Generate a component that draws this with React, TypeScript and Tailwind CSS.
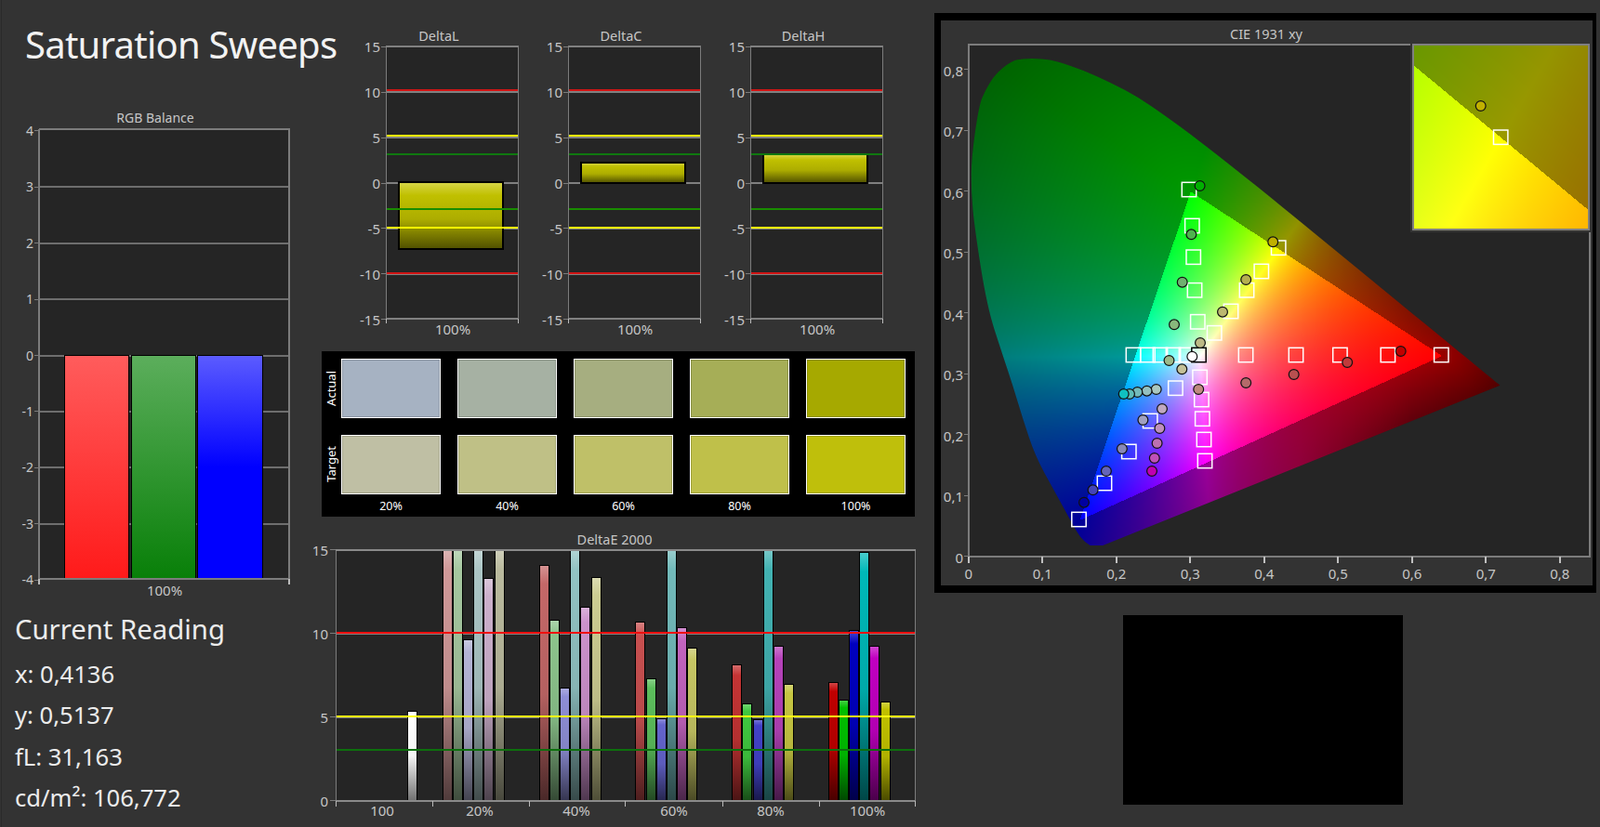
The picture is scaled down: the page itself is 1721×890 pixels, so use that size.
import { useEffect, useRef } from "react";

const AXIS = "#c6c6c6";
const FRAME = "#7c7c7c";
const GRID = "#6e6e6e";
const PLOT = "#252525";

// ---- colour helpers ----

type RGB = [number, number, number];

const shade = (c: RGB, f: number) => `rgb(${c.map((v) => Math.round(v * f)).join(",")})`;
const tint = (c: RGB, f: number) => `rgb(${c.map((v) => Math.round(v + (255 - v) * f)).join(",")})`;

// ---- CIE gamut ----

const TRI: [number, number][] = [
  [0.64, 0.33],
  [0.3, 0.6],
  [0.15, 0.06],
];

// outline of the diagram, measured off the chart and not the textbook locus
const LOCUS: [number, number][] = [
  [0.1645, 0.018], [0.1566, 0.024], [0.147, 0.0388], [0.133, 0.07], [0.115, 0.11], [0.09, 0.165],
  [0.0732, 0.227], [0.06, 0.28], [0.045, 0.335], [0.025, 0.41], [0.0082, 0.5384], [0.0035, 0.6],
  [0.0039, 0.6548], [0.0139, 0.7402], [0.0226, 0.766], [0.036, 0.792], [0.057, 0.813], [0.072, 0.818],
  [0.1, 0.818], [0.12, 0.813], [0.1547, 0.799], [0.1929, 0.778], [0.2296, 0.7543], [0.2658, 0.7243],
  [0.3016, 0.6923], [0.3373, 0.6589], [0.3731, 0.6245], [0.4087, 0.5896], [0.4441, 0.5547],
  [0.4788, 0.5202], [0.5125, 0.4866], [0.5448, 0.4544], [0.5752, 0.4242], [0.6029, 0.3965],
  [0.627, 0.3725], [0.6482, 0.3514], [0.6658, 0.334], [0.6801, 0.3197], [0.6915, 0.3083],
  [0.7006, 0.2993], [0.7079, 0.292], [0.714, 0.2859], [0.7191, 0.2809], [0.1817, 0.018],
];

function segDist(px: number, py: number, a: [number, number], b: [number, number]) {
  const dx = b[0] - a[0];
  const dy = b[1] - a[1];
  const t = Math.max(0, Math.min(1, ((px - a[0]) * dx + (py - a[1]) * dy) / (dx * dx + dy * dy)));
  return Math.hypot(px - a[0] - t * dx, py - a[1] - t * dy);
}

function gamutColor(x: number, y: number): RGB {
  const X = x / y;
  const Z = (1 - x - y) / y;
  const r = 3.2406 * X - 1.5372 - 0.4986 * Z;
  const g = -0.9689 * X + 1.8758 + 0.0415 * Z;
  const b = 0.0557 * X - 0.204 + 1.057 * Z;
  const inside = r >= 0 && g >= 0 && b >= 0;
  const cr = Math.max(r, 0);
  const cg = Math.max(g, 0);
  const cb = Math.max(b, 0);
  const m = Math.max(cr, cg, cb, 1e-6);
  let f = 1;
  if (!inside) {
    // outside the display triangle the diagram is dimmed, more so further out
    const d = Math.min(segDist(x, y, TRI[0], TRI[1]), segDist(x, y, TRI[1], TRI[2]), segDist(x, y, TRI[2], TRI[0]));
    const k = 0.64 + 2.4 * Math.max(0, Math.min(1, (x - 0.45) / 0.15));
    f = Math.max(0.33, 0.6 - k * d);
  }
  return [(255 * f * cr) / m, (255 * f * cg) / m, (255 * f * cb) / m];
}

function useGamut(
  width: number,
  height: number,
  toXY: (px: number, py: number) => [number, number],
  clip?: (ctx: CanvasRenderingContext2D) => void,
) {
  const ref = useRef<HTMLCanvasElement>(null);
  useEffect(() => {
    const ctx = ref.current?.getContext("2d");
    if (!ctx) return;
    const buffer = document.createElement("canvas");
    buffer.width = width;
    buffer.height = height;
    const bctx = buffer.getContext("2d")!;
    const img = bctx.createImageData(width, height);
    for (let py = 0; py < height; py++) {
      for (let px = 0; px < width; px++) {
        const [x, y] = toXY(px, py);
        if (y <= 0.001) continue;
        const [r, g, b] = gamutColor(x, y);
        const i = (py * width + px) * 4;
        img.data[i] = r;
        img.data[i + 1] = g;
        img.data[i + 2] = b;
        img.data[i + 3] = 255;
      }
    }
    bctx.putImageData(img, 0, 0);
    ctx.save();
    if (clip) clip(ctx);
    ctx.drawImage(buffer, 0, 0);
    ctx.restore();
  }, []);
  return ref;
}

// ---- RGB balance ----

function RgbBalance() {
  const yOf = (v: number) => 382.5 - v * 60.4;
  return (
    <svg width={344} height={530} viewBox="2 115 344 530" className="block" shapeRendering="crispEdges">
      <text x={167} y={132} textAnchor="middle" fontSize={14} fill={AXIS}>RGB Balance</text>
      <rect x={42} y={139} width={269} height={484} fill={PLOT} />
      {[3, 2, 1, 0, -1, -2, -3].map((v) => (
        <line key={v} x1={42} x2={311} y1={yOf(v)} y2={yOf(v)} stroke={GRID} strokeWidth={2} />
      ))}
      {[4, 3, 2, 1, 0, -1, -2, -3, -4].map((v) => (
        <g key={v}>
          <line x1={37} x2={42} y1={yOf(v)} y2={yOf(v)} stroke={FRAME} strokeWidth={1} />
          <text x={36} y={yOf(v) + 5} textAnchor="end" fontSize={14} fill={AXIS}>{v}</text>
        </g>
      ))}
      <defs>
        <linearGradient id="rgb-r" x1="0" x2="0" y1="0" y2="1">
          <stop offset="0" stopColor="#ff5c5c" />
          <stop offset="1" stopColor="#ff1a1a" />
        </linearGradient>
        <linearGradient id="rgb-g" x1="0" x2="0" y1="0" y2="1">
          <stop offset="0" stopColor="#5cae5c" />
          <stop offset="1" stopColor="#087f08" />
        </linearGradient>
        <linearGradient id="rgb-b" x1="0" x2="0" y1="0" y2="1">
          <stop offset="0" stopColor="#5c5cff" />
          <stop offset="0.5" stopColor="#0000ff" />
          <stop offset="1" stopColor="#0000ff" />
        </linearGradient>
      </defs>
      <rect x={69} y={382} width={69} height={241} fill="url(#rgb-r)" stroke="#000" />
      <rect x={141} y={382} width={69} height={241} fill="url(#rgb-g)" stroke="#000" />
      <rect x={212} y={382} width={70} height={241} fill="url(#rgb-b)" stroke="#000" />
      <path d="M42 139V623H311V139H42" fill="none" stroke={FRAME} strokeWidth={2} />
      <path d="M42 623v6M311 623v6" stroke="#bbb" strokeWidth={2} />
      <text x={177} y={641} textAnchor="middle" fontSize={15} fill={AXIS}>100%</text>
    </svg>
  );
}

// ---- Delta L / C / H ----

function DeltaChart({ title, top, bottom }: { title: string; top: number; bottom: number }) {
  const yOf = (v: number) => 197 - v * 9.78;
  const id = `bar-${title}`;
  return (
    <svg width={196} height={345} viewBox="0 25 196 345" className="block" shapeRendering="crispEdges">
      <text x={106} y={44} textAnchor="middle" fontSize={14.5} fill={AXIS}>{title}</text>
      <rect x={49} y={49} width={142} height={294} fill={PLOT} />
      {[10, 5, 0, -5, -10].map((v) => (
        <line key={v} x1={49} x2={191} y1={yOf(v)} y2={yOf(v)} stroke="#808080" strokeWidth={2} />
      ))}
      <defs>
        <linearGradient id={id} x1="0" x2="0" y1="0" y2="1">
          <stop offset="0" stopColor="#d8d64a" />
          <stop offset="0.2" stopColor="#c0c000" />
          <stop offset="0.55" stopColor="#adad00" />
          <stop offset="1" stopColor="#4f4f00" />
        </linearGradient>
      </defs>
      <rect x={63} y={top} width={112} height={bottom - top} fill={`url(#${id})`} stroke="#000" strokeWidth={2} />
      <line x1={49} x2={191} y1={97} y2={97} stroke="#d01414" strokeWidth={2} />
      <line x1={49} x2={191} y1={294} y2={294} stroke="#d01414" strokeWidth={2} />
      <line x1={49} x2={191} y1={146} y2={146} stroke="#ffff00" strokeWidth={2} />
      <line x1={49} x2={191} y1={245} y2={245} stroke="#ffff00" strokeWidth={2} />
      <line x1={49} x2={191} y1={166} y2={166} stroke="#0f780f" strokeWidth={2} />
      <line x1={49} x2={191} y1={225} y2={225} stroke="#198c00" strokeWidth={2} />
      <path d="M49 343V49H191V343" fill="none" stroke={FRAME} strokeWidth={1} />
      <path d="M49 49.5H191M49 342.5H191" stroke="#808080" strokeWidth={2} />
      <path d="M49 343v5M191 343v5" stroke="#bbb" strokeWidth={1} />
      {[15, 10, 5, 0, -5, -10, -15].map((v) => (
        <g key={v}>
          <line x1={44} x2={49} y1={yOf(v)} y2={yOf(v)} stroke={FRAME} />
          <text x={43} y={yOf(v) + 6} textAnchor="end" fontSize={15} fill={AXIS}>{v}</text>
        </g>
      ))}
      <text x={121} y={360} textAnchor="middle" fontSize={15} fill={AXIS}>100%</text>
    </svg>
  );
}

// ---- Swatches ----

const SWATCHES = [
  { actual: "#a6b2c2", target: "#bfbfa4", label: "20%" },
  { actual: "#a6b1a3", target: "#bfc086", label: "40%" },
  { actual: "#a6ae80", target: "#bfc068", label: "60%" },
  { actual: "#a6ae57", target: "#bfc04a", label: "80%" },
  { actual: "#a6a900", target: "#bfbf0b", label: "100%" },
];

const SWATCH_CLASS = "h-[64px] box-border border border-white shadow-[inset_0_0_0_1px_rgba(0,0,0,0.14)]";

function Swatches() {
  return (
    <div className="mt-[8px] flex h-[178px] w-[638px] bg-black pt-[8px] font-['Liberation_Sans',sans-serif] text-white">
      <div className="flex w-[21px] flex-col text-[13px]">
        <div className="flex h-[64px] items-center justify-center">
          <span className="rotate-180 [writing-mode:vertical-rl] leading-none">Actual</span>
        </div>
        <div className="mt-[17px] flex h-[64px] items-center justify-center">
          <span className="rotate-180 [writing-mode:vertical-rl] leading-none">Target</span>
        </div>
      </div>
      <div className="grid grid-cols-[repeat(5,107px)] gap-x-[18px] gap-y-[17px]">
        {SWATCHES.map((s) => (
          <div key={s.label} className={SWATCH_CLASS} style={{ backgroundColor: s.actual }} />
        ))}
        {SWATCHES.map((s) => (
          <div key={s.label} className={SWATCH_CLASS} style={{ backgroundColor: s.target }} />
        ))}
        {SWATCHES.map((s) => (
          <div key={s.label} className="-mt-[14px] text-center font-['Noto_Sans',sans-serif] text-[12.5px] leading-[20px]">
            {s.label}
          </div>
        ))}
      </div>
    </div>
  );
}

// ---- DeltaE 2000 ----

type Bar = { v: number; c: RGB };

const DE_GROUPS: { x0: number; bars: Bar[] }[] = [
  {
    x0: 480.4,
    bars: [
      { v: 16, c: [208, 152, 152] }, { v: 16, c: [166, 200, 160] }, { v: 9.63, c: [180, 180, 214] },
      { v: 16, c: [172, 198, 198] }, { v: 13.3, c: [204, 176, 204] }, { v: 16, c: [186, 186, 158] },
    ],
  },
  {
    x0: 584.3,
    bars: [
      { v: 14.07, c: [196, 104, 104] }, { v: 10.8, c: [140, 196, 140] }, { v: 6.74, c: [142, 142, 214] },
      { v: 16, c: [146, 196, 196] }, { v: 11.6, c: [204, 146, 204] }, { v: 13.4, c: [204, 204, 146] },
    ],
  },
  {
    x0: 688.1,
    bars: [
      { v: 10.7, c: [200, 80, 80] }, { v: 7.33, c: [92, 190, 92] }, { v: 4.93, c: [100, 100, 204] },
      { v: 16, c: [114, 186, 186] }, { v: 10.37, c: [194, 100, 190] }, { v: 9.13, c: [198, 198, 100] },
    ],
  },
  {
    x0: 792,
    bars: [
      { v: 8.15, c: [196, 52, 52] }, { v: 5.83, c: [64, 200, 64] }, { v: 4.85, c: [66, 66, 200] },
      { v: 16, c: [66, 178, 178] }, { v: 9.28, c: [182, 66, 186] }, { v: 7.0, c: [198, 198, 66] },
    ],
  },
  {
    x0: 895.4,
    bars: [
      { v: 7.07, c: [192, 0, 0] }, { v: 6.02, c: [0, 192, 0] }, { v: 10.22, c: [0, 0, 192] },
      { v: 14.9, c: [0, 184, 184] }, { v: 9.28, c: [192, 0, 192] }, { v: 5.93, c: [192, 192, 0] },
    ],
  },
];

function DeltaE() {
  const yOf = (v: number) => 861.7 - v * 18;
  const bars = [
    { x: 442.4, v: 5.4, c: [255, 255, 255] as RGB },
    ...DE_GROUPS.flatMap((g) => g.bars.map((b, i) => ({ x: g.x0 + i * 11.2, v: b.v, c: b.c }))),
  ];
  const ticks = [361, 465, 569, 672, 777, 881, 984.5];
  const labels: [string, number][] = [["100", 411], ["20%", 516], ["40%", 620], ["60%", 725], ["80%", 829], ["100%", 933]];
  return (
    <svg width={659} height={325} viewBox="346 565 659 325" className="mt-[9px] block overflow-visible" shapeRendering="crispEdges">
      <text x={661} y={586} textAnchor="middle" fontSize={14.5} fill={AXIS}>DeltaE 2000</text>
      <rect x={361} y={591} width={624} height={271} fill={PLOT} />
      {[10, 5].map((v) => (
        <line key={v} x1={361} x2={985} y1={yOf(v)} y2={yOf(v)} stroke="#808080" strokeWidth={2} />
      ))}
      <defs>
        {bars.map((b, i) => (
          <linearGradient key={i} id={`de-${i}`} x1="0" x2="0" y1="0" y2="1">
            {i === 0 ? (
              <>
                <stop offset="0" stopColor="#ffffff" />
                <stop offset="0.5" stopColor="#f4f4f4" />
                <stop offset="1" stopColor="#707070" />
              </>
            ) : (
              <>
                <stop offset="0" stopColor={tint(b.c, 0.3)} />
                <stop offset="0.08" stopColor={shade(b.c, 1)} />
                <stop offset="0.55" stopColor={shade(b.c, 0.92)} />
                <stop offset="1" stopColor={shade(b.c, 0.38)} />
              </>
            )}
          </linearGradient>
        ))}
      </defs>
      {bars.map((b, i) => {
        const top = Math.max(yOf(b.v), 591);
        return <rect key={i} x={Math.round(b.x - 4.8)} y={Math.round(top)} width={10} height={Math.round(861.7 - top)} fill={`url(#de-${i})`} stroke="#000" strokeWidth={1} />;
      })}
      <line x1={361} x2={985} y1={681} y2={681} stroke="#f00f0f" strokeWidth={2} />
      <line x1={361} x2={985} y1={771} y2={771} stroke="#ffff11" strokeWidth={2} />
      <line x1={361} x2={985} y1={807} y2={807} stroke="#0d700d" strokeWidth={2} />
      <path d="M361 861.5V591.5H984.7V861.5" fill="none" stroke={FRAME} strokeWidth={1} />
      <path d="M361 591.5H984.7M361 861.5H984.7" fill="none" stroke="#8a8a8a" strokeWidth={2} />
      {ticks.map((t) => (
        <line key={t} x1={t} x2={t} y1={862} y2={868} stroke="#bbb" strokeWidth={1} />
      ))}
      {[15, 10, 5, 0].map((v) => (
        <g key={v}>
          <line x1={355} x2={361} y1={yOf(v)} y2={yOf(v)} stroke={FRAME} />
          <text x={353} y={yOf(v) + 6} textAnchor="end" fontSize={15} fill={AXIS}>{v}</text>
        </g>
      ))}
      {labels.map(([t, x]) => (
        <text key={t} x={x} y={878} textAnchor="middle" fontSize={15} fill={AXIS}>{t}</text>
      ))}
    </svg>
  );
}

// ---- CIE chart ----

// page coordinates of the markers, read off the diagram
const SQUARES: [number, number][] = [
  [1340, 382], [1394, 382], [1441.4, 382], [1492.9, 382], [1550.3, 382],
  [1290.6, 406], [1292.4, 430], [1293.3, 450.7], [1295, 473], [1296, 496],
  [1264.4, 417.7], [1237.2, 453], [1214.3, 486], [1188, 520], [1160.5, 559],
  [1288.3, 346.3], [1285, 312.3], [1283.7, 276.7], [1282.3, 243], [1279, 204],
  [1306.2, 358.3], [1324, 335], [1341, 312.3], [1356.8, 292], [1375.2, 266.7],
  [1219, 382], [1234.5, 382], [1248, 382], [1262, 382], [1276, 382],
];

const DOTS: [number, number, string][] = [
  [1289.2, 419, "#c08a80"], [1340.2, 412, "#b56a6a"], [1391.7, 403, "#b85050"], [1449.2, 390, "#c03a3a"], [1506.7, 378, "#c00000"],
  [1257.5, 388, "#9cba8a"], [1263, 349.3, "#88b87c"], [1271.7, 303.7, "#70b070"], [1281.4, 252.3, "#4eb24e"], [1290.6, 200, "#00b000"],
  [1271.3, 397.3, "#c4c098"], [1291, 369, "#bdb985"], [1315, 335.7, "#bcb870"], [1340.2, 301, "#b5b050"], [1369.2, 260.3, "#c0b000"],
  [1243.7, 419, "#aac8c0"], [1233.6, 420.7, "#94c0c0"], [1223.4, 422, "#74baba"], [1215, 424, "#5ebcb8"], [1208.7, 424, "#10c0c0"],
  [1229.4, 452, "#a0a0c0"], [1206.9, 483, "#8888b8"], [1189.9, 507, "#6464b8"], [1175.6, 527.3, "#4444b8"], [1166, 540.7, "#0000a0"],
  [1250, 440, "#c0a8c0"], [1247.4, 461, "#c090bc"], [1244.6, 477, "#bc70b0"], [1241.8, 493, "#c050b8"], [1239, 507, "#c000b0"],
];

const OX = 1012;
const OY = 22;
const FW = 701;
const FH = 608;
const pageX = (x: number) => 1041.8 + 795 * x;
const pageY = (y: number) => 598.7 - 655 * y;

function Square({ x, y, stroke = "#fff" }: { x: number; y: number; stroke?: string }) {
  return <rect x={x - 7.7} y={y - 7.7} width={15.4} height={15.4} fill="none" stroke={stroke} strokeWidth={1.5} />;
}

function Dot({ x, y, fill }: { x: number; y: number; fill: string }) {
  return <circle cx={x} cy={y} r={5.4} fill={fill} stroke="#111" strokeWidth={1.2} />;
}

function Inset() {
  const ref = useGamut(187, 197, (px, py) => [
    0.4193 + (px + 1521 - 1614.2) / 3800,
    0.5053 - (py + 49 - 147.7) / 3963,
  ]);
  return (
    <div className="absolute left-[507px] top-[25px] box-border h-[201px] w-[191px] border-2 border-[#808080] shadow-[0_0_0_2px_#333]">
      <canvas ref={ref} width={187} height={197} className="block" />
      <svg width={187} height={197} viewBox="1521 49 187 197" className="absolute left-0 top-0">
        <Square x={1614.2} y={147.7} />
        <Dot x={1592.7} y={114} fill="#c0b000" />
      </svg>
    </div>
  );
}

function CieChart() {
  const ref = useGamut(
    FW,
    FH,
    (px, py) => [(px + OX - 1041.8) / 795, (598.7 - (py + OY)) / 655],
    (ctx) => {
      // rounded through the midpoints, the measured outline has no corners on its curved side
      const pts = LOCUS.map(([x, y]) => [pageX(x) - OX, pageY(y) - OY]);
      const last = pts.length - 2;
      ctx.beginPath();
      ctx.moveTo(pts[0][0], pts[0][1]);
      for (let i = 1; i < last; i++) {
        ctx.quadraticCurveTo(pts[i][0], pts[i][1], (pts[i][0] + pts[i + 1][0]) / 2, (pts[i][1] + pts[i + 1][1]) / 2);
      }
      ctx.lineTo(pts[last][0], pts[last][1]);
      ctx.lineTo(pts[last + 1][0], pts[last + 1][1]);
      ctx.closePath();
      ctx.clip();
    },
  );
  const xTicks = [0, 0.1, 0.2, 0.3, 0.4, 0.5, 0.6, 0.7, 0.8];
  const fmt = (v: number) => (v === 0 ? "0" : v.toFixed(1).replace(".", ","));
  return (
    <div className="relative box-border h-[624px] w-[712px] border-t-[8px] border-r-[4px] border-b-[8px] border-l-[7px] border-black bg-[#333]">
      <svg width={FW} height={FH} viewBox={`${OX} ${OY} ${FW} ${FH}`} className="block" shapeRendering="crispEdges">
        <text x={1362} y={42} textAnchor="middle" fontSize={14.5} fill={AXIS}>CIE 1931 xy</text>
        <rect x={1042} y={48} width={668} height={551} fill={PLOT} />
        <path d="M1042 599V48H1710V599H1042" fill="none" stroke={FRAME} strokeWidth={2} />
        {xTicks.map((v) => (
          <g key={v}>
            <line x1={pageX(v)} x2={pageX(v)} y1={599} y2={605.5} stroke="#c0c0c0" strokeWidth={2} />
            <text x={pageX(v)} y={623} textAnchor="middle" fontSize={15} fill={AXIS}>{fmt(v)}</text>
            <line x1={1037} x2={1042} y1={pageY(v)} y2={pageY(v)} stroke={FRAME} />
            <text x={1036} y={pageY(v) + 7} textAnchor="end" fontSize={15} fill={AXIS}>{fmt(v)}</text>
          </g>
        ))}
      </svg>
      <canvas ref={ref} width={FW} height={FH} className="absolute left-0 top-0" />
      <svg width={FW} height={FH} viewBox={`${OX} ${OY} ${FW} ${FH}`} className="absolute left-0 top-0">
        {SQUARES.map(([x, y], i) => (
          <Square key={i} x={x} y={y} />
        ))}
        <Square x={1289.5} y={382} stroke="#000" />
        {DOTS.map(([x, y, c], i) => (
          <Dot key={i} x={x} y={y} fill={c} />
        ))}
        <Dot x={1282.3} y={383.7} fill="#fff" />
      </svg>
      <Inset />
    </div>
  );
}

// ---- page ----

export default function App() {
  return (
    <div className="flex h-[890px] w-[1721px] overflow-hidden bg-[#333333] font-['Noto_Sans',sans-serif]">
      <div className="ml-px w-px bg-[#2a2a2a]" />
      <div className="flex w-[344px] flex-col">
        <h1 className="h-[115px] whitespace-nowrap pl-[25px] pt-[20px] font-['Lato',sans-serif] text-[40px] leading-[56px] font-normal tracking-[-0.75px] text-[#f2f2f2]">Saturation Sweeps</h1>
        <RgbBalance />
        <div className="mt-[10px] pl-[14px] text-[#ececec]">
          <div className="h-[48px] text-[29.3px] leading-[44px]">Current Reading</div>
          <div className="text-[25.6px] leading-[45px]">x: 0,4136</div>
          <div className="text-[25.6px] leading-[43.5px]">y: 0,5137</div>
          <div className="text-[25.6px] leading-[45px]">fL: 31,163</div>
          <div className="text-[25.6px] leading-[44.5px]">cd/m²: 106,772</div>
        </div>
      </div>
      <div className="flex w-[659px] flex-col pt-[25px]">
        <div className="ml-[20px] flex">
          <DeltaChart title="DeltaL" top={196} bottom={268} />
          <DeltaChart title="DeltaC" top={175} bottom={197} />
          <DeltaChart title="DeltaH" top={166} bottom={197} />
        </div>
        <Swatches />
        <DeltaE />
      </div>
      <div className="flex flex-col pt-[14px]">
        <CieChart />
        <div className="ml-[203px] mt-[24px] h-[204px] w-[301px] bg-black" />
      </div>
    </div>
  );
}
